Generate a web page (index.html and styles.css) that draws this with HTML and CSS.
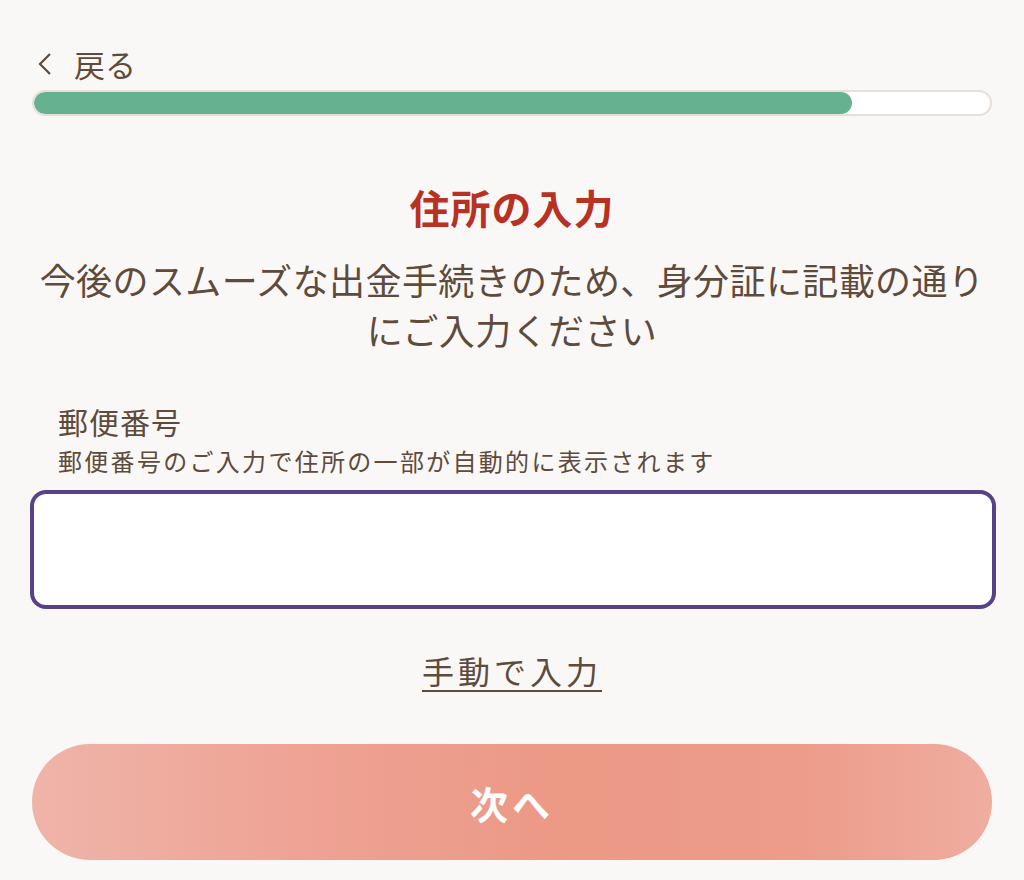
FILE: index.html
```html
<!DOCTYPE html>
<html lang="ja">

<head>
    <meta charset="UTF-8">
    <meta name="viewport" content="width=device-width, initial-scale=1.0">
    <title>住所の入力</title>
    <link rel="stylesheet" href="styles.css">
</head>

<body>

    <div class="page">

        <!-- 戻る -->
        <a class="back" href="#">
            <svg class="back-icon" width="20" height="26" viewBox="0 0 20 26">
                <path d="M16 3 L6 13 L16 23" fill="none" stroke="#5e4b3c" stroke-width="2.2" />
            </svg>
            <span>戻る</span>
        </a>

        <!-- 進捗 -->
        <div class="progress">
            <div class="progress-bar" style="width: 85.6%"></div>
        </div>

        <h1 class="title">住所の入力</h1>
        <p class="lead">今後のスムーズな出金手続きのため、身分証に記載の通りにご入力ください</p>

        <!-- 郵便番号 -->
        <div class="field">
            <label for="zip" class="field-label">郵便番号</label>
            <p class="field-help">郵便番号のご入力で住所の一部が自動的に表示されます</p>
            <input type="text" id="zip" class="field-input">
        </div>

        <a class="manual" href="#">手動で入力</a>

        <button type="button" class="next">次へ</button>

    </div>

</body>

</html>
```

FILE: styles.css
```css
body {
    margin: 0;
    background-color: #faf8f7;
    font-family: "Noto Sans CJK JP", "Noto Sans", sans-serif;
    color: #5e4b3c;
}

.page {
    width: 960px;
    margin: 0 auto;
    padding-top: 44px;
}

.back {
    display: flex;
    align-items: center;
    gap: 20px;
    margin-left: 2px;
    color: #5e4b3c;
    text-decoration: none;
    font-size: 31px;
    line-height: 40px;
}

.back-icon {
    display: block;
}

.progress {
    height: 22px;
    margin-top: 6px;
    border: 2px solid #e6dfdb;
    border-radius: 13px;
    background-color: white;
    overflow: hidden;
}

.progress-bar {
    height: 100%;
    background-color: #66b190;
    border-radius: 11px;
}

.title {
    margin: 63px 0 0;
    text-align: center;
    font-size: 40px;
    line-height: 56px;
    letter-spacing: 1px;
    color: #b83224;
    font-weight: bold;
}

.lead {
    margin: 19px 0 0;
    text-align: center;
    font-size: 36px;
    line-height: 50px;
    letter-spacing: 0.4px;
}

.field {
    margin-top: 47px;
}

.field-label {
    display: block;
    margin-left: 26px;
    font-size: 30px;
    line-height: 40px;
    letter-spacing: 1px;
}

.field-help {
    margin: 4px 0 0 26px;
    font-size: 24px;
    line-height: 32px;
    letter-spacing: 2.3px;
}

.field-input {
    display: block;
    box-sizing: border-box;
    width: 966px;
    height: 119px;
    margin: 13px 0 0 -2px;
    border: 4px solid #574287;
    border-radius: 16px;
    background-color: white;
    font-size: 30px;
    padding: 0 20px;
    outline: none;
}

.manual {
    display: block;
    width: fit-content;
    margin: 39px auto 0;
    color: #5e4b3c;
    font-size: 32px;
    line-height: 44px;
    letter-spacing: 4px;
    text-decoration: underline;
    text-decoration-thickness: 2px;
    text-underline-offset: 6px;
}

.next {
    display: block;
    width: 960px;
    height: 116px;
    margin-top: 52px;
    border: none;
    border-radius: 58px;
    background: linear-gradient(90deg, #efb4a9 0%, #eea293 30%, #ec9986 55%, #ed9c8a 80%, #efada0 100%);
    color: white;
    font-family: inherit;
    font-size: 38px;
    font-weight: bold;
    letter-spacing: 4px;
}
```
